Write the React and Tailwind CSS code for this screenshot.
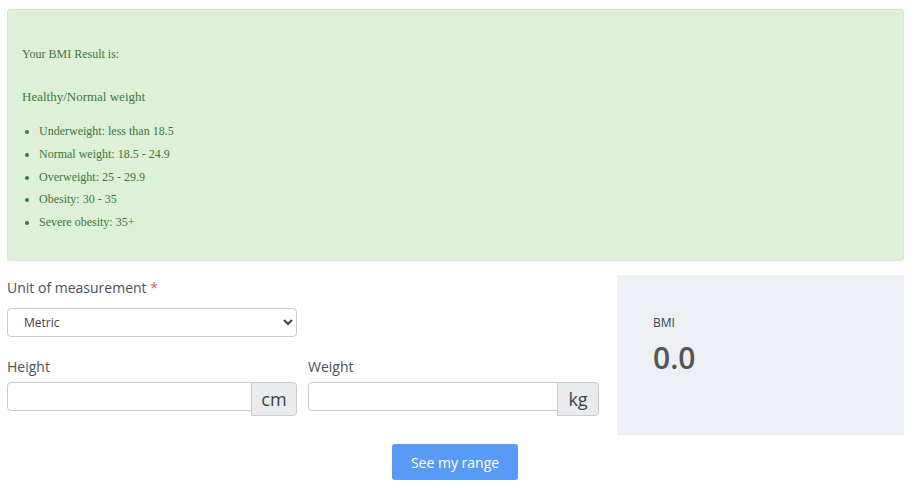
import React, { useState } from 'react';

const ranges = [
  'Underweight: less than 18.5',
  'Normal weight: 18.5 - 24.9',
  'Overweight: 25 - 29.9',
  'Obesity: 30 - 35',
  'Severe obesity: 35+'
];

const sans = { fontFamily: '"Open Sans", "Noto Sans", sans-serif' };

const UnitInput = ({ label, unit, value, onChange, addonWidth }) => (
  <div className="flex flex-col">
    <label className="text-[14px] leading-[20px] text-[#4a5160] mb-[5px]">{label}</label>
    <div className="flex items-start">
      <input
        type="text"
        value={value}
        onChange={onChange}
        className="flex-1 min-w-0 h-[29px] border border-[#c9cbd0] rounded-l-[4px] px-2 text-[13px] outline-none"
      />
      <span
        className={`${addonWidth} -ml-px h-[34px] flex items-center justify-center bg-[#eaebec] border border-[#c9cbd0] rounded-r-[4px] text-[18px] text-[#3c4250]`}
      >
        {unit}
      </span>
    </div>
  </div>
);

const App = () => {
  const [unit, setUnit] = useState('metric');
  const [height, setHeight] = useState('');
  const [weight, setWeight] = useState('');

  return (
    <div className="w-[914px] h-[488px] bg-white overflow-hidden pt-[9px] px-[7px]" style={sans}>
      {/* resultado */}
      <div
        className="w-[897px] h-[252px] bg-[#dff0d8] border border-[#d3e8c8] rounded-[3px] text-[#3c763d] pl-[14px] pt-[36px]"
        style={{ fontFamily: '"Liberation Serif", serif' }}
      >
        <p className="text-[12px] leading-[17px]">Your BMI Result is:</p>
        <p className="text-[13px] leading-[18px] mt-[25px]">Healthy/Normal weight</p>
        <ul className="list-disc pl-[17px] mt-[14px] text-[12px]">
          {ranges.map((r) => (
            <li key={r} className="leading-[22.75px]">{r}</li>
          ))}
        </ul>
      </div>

      <div className="flex mt-[14px]">
        <div className="w-[592px] flex flex-col">
          <label className="text-[14px] leading-[20px] text-[#4a5160] mt-[3px]">
            Unit of measurement <span className="text-[#e0605d]">*</span>
          </label>
          <select
            value={unit}
            onChange={(e) => setUnit(e.target.value)}
            className="w-[290px] h-[29px] mt-[10px] border border-[#c9cbd0] rounded-[4px] pl-[12px] text-[12px] text-[#3c4250] bg-white outline-none"
          >
            <option value="metric">Metric</option>
            <option value="imperial">Imperial</option>
          </select>

          <div className="grid grid-cols-[290px_291px] gap-[11px] mt-[20px]">
            <UnitInput
              label="Height"
              unit="cm"
              value={height}
              onChange={(e) => setHeight(e.target.value)}
              addonWidth="w-[46px]"
            />
            <UnitInput
              label="Weight"
              unit="kg"
              value={weight}
              onChange={(e) => setWeight(e.target.value)}
              addonWidth="w-[42px]"
            />
          </div>
        </div>

        <div className="ml-[18px] w-[287px] h-[160px] bg-[#eceff3] pl-[36px] pt-[39px]">
          <p className="text-[12px] leading-[18px] text-[#3c4250]">BMI</p>
          <p className="text-[30px] leading-[36px] font-semibold text-[#555555] mt-[8px]">0.0</p>
        </div>
      </div>

      <div className="flex justify-center mt-[9px] pr-[4px]">
        <button className="w-[126px] h-[36px] bg-[#589bf5] text-white text-[14px] rounded-[3px]">
          See my range
        </button>
      </div>
    </div>
  );
};

export default App;
